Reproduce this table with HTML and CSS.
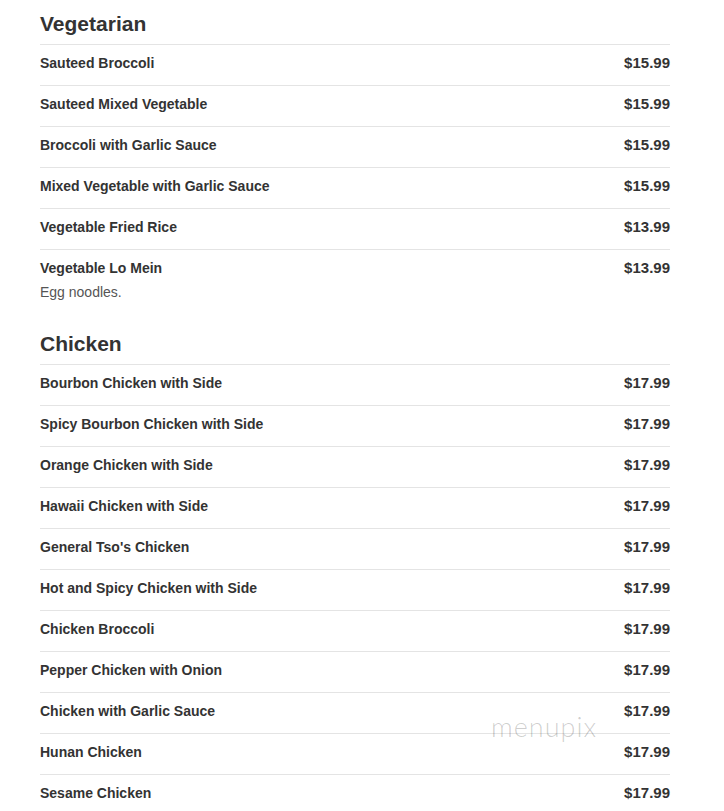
FILE: index.html
```html
<!DOCTYPE html>
<html>
<head>
<meta charset="utf-8">
<link rel="stylesheet" href="styles.css">
</head>
<body>
<div class="menu">
  <section class="section">
    <h2 class="section-title">Vegetarian</h2>
    <ul class="items">
      <li class="item"><div class="row"><span class="name">Sauteed Broccoli</span><span class="price">$15.99</span></div></li>
      <li class="item"><div class="row"><span class="name">Sauteed Mixed Vegetable</span><span class="price">$15.99</span></div></li>
      <li class="item"><div class="row"><span class="name">Broccoli with Garlic Sauce</span><span class="price">$15.99</span></div></li>
      <li class="item"><div class="row"><span class="name">Mixed Vegetable with Garlic Sauce</span><span class="price">$15.99</span></div></li>
      <li class="item"><div class="row"><span class="name">Vegetable Fried Rice</span><span class="price">$13.99</span></div></li>
      <li class="item"><div class="row"><span class="name">Vegetable Lo Mein</span><span class="price">$13.99</span></div><p class="desc">Egg noodles.</p></li>
    </ul>
  </section>
  <section class="section">
    <h2 class="section-title">Chicken</h2>
    <ul class="items">
      <li class="item"><div class="row"><span class="name">Bourbon Chicken with Side</span><span class="price">$17.99</span></div></li>
      <li class="item"><div class="row"><span class="name">Spicy Bourbon Chicken with Side</span><span class="price">$17.99</span></div></li>
      <li class="item"><div class="row"><span class="name">Orange Chicken with Side</span><span class="price">$17.99</span></div></li>
      <li class="item"><div class="row"><span class="name">Hawaii Chicken with Side</span><span class="price">$17.99</span></div></li>
      <li class="item"><div class="row"><span class="name">General Tso's Chicken</span><span class="price">$17.99</span></div></li>
      <li class="item"><div class="row"><span class="name">Hot and Spicy Chicken with Side</span><span class="price">$17.99</span></div></li>
      <li class="item"><div class="row"><span class="name">Chicken Broccoli</span><span class="price">$17.99</span></div></li>
      <li class="item"><div class="row"><span class="name">Pepper Chicken with Onion</span><span class="price">$17.99</span></div></li>
      <li class="item"><div class="row"><span class="name">Chicken with Garlic Sauce</span><span class="price">$17.99</span></div></li>
      <li class="item"><div class="row"><span class="name">Hunan Chicken</span><span class="price">$17.99</span></div></li>
      <li class="item"><div class="row"><span class="name">Sesame Chicken</span><span class="price">$17.99</span></div></li>
    </ul>
  </section>
</div>
<div class="watermark">menupix</div>
</body>
</html>
```
FILE: styles.css
```css
html, body {
  margin: 0;
  padding: 0;
  background: #fff;
}
body {
  font-family: "Liberation Sans", Arial, sans-serif;
  color: #333;
  overflow: hidden;
}
.menu {
  width: 630px;
  padding: 11px 0 0 40px;
}
.section + .section {
  margin-top: 17px;
}
.section-title {
  margin: 0 0 7px;
  font-size: 21px;
  line-height: 26px;
  font-weight: bold;
  color: #333;
}
.items {
  list-style: none;
  margin: 0;
  padding: 0;
}
.item {
  border-top: 1px solid #e4e4e4;
  padding: 8px 0 12px;
}
.row {
  display: flex;
  justify-content: space-between;
  align-items: baseline;
}
.name {
  font-size: 14px;
  line-height: 20px;
  font-weight: bold;
}
.price {
  font-size: 15px;
  line-height: 20px;
  font-weight: bold;
}
.desc {
  margin: 4px 0 0;
  font-size: 14px;
  line-height: 20px;
  color: #555;
}
.watermark {
  position: absolute;
  left: 491px;
  top: 710px;
  font-family: Lato, "Open Sans", sans-serif;
  font-weight: 300;
  font-size: 27px;
  letter-spacing: 1px;
  color: rgba(0, 0, 0, 0.2);
}
```
